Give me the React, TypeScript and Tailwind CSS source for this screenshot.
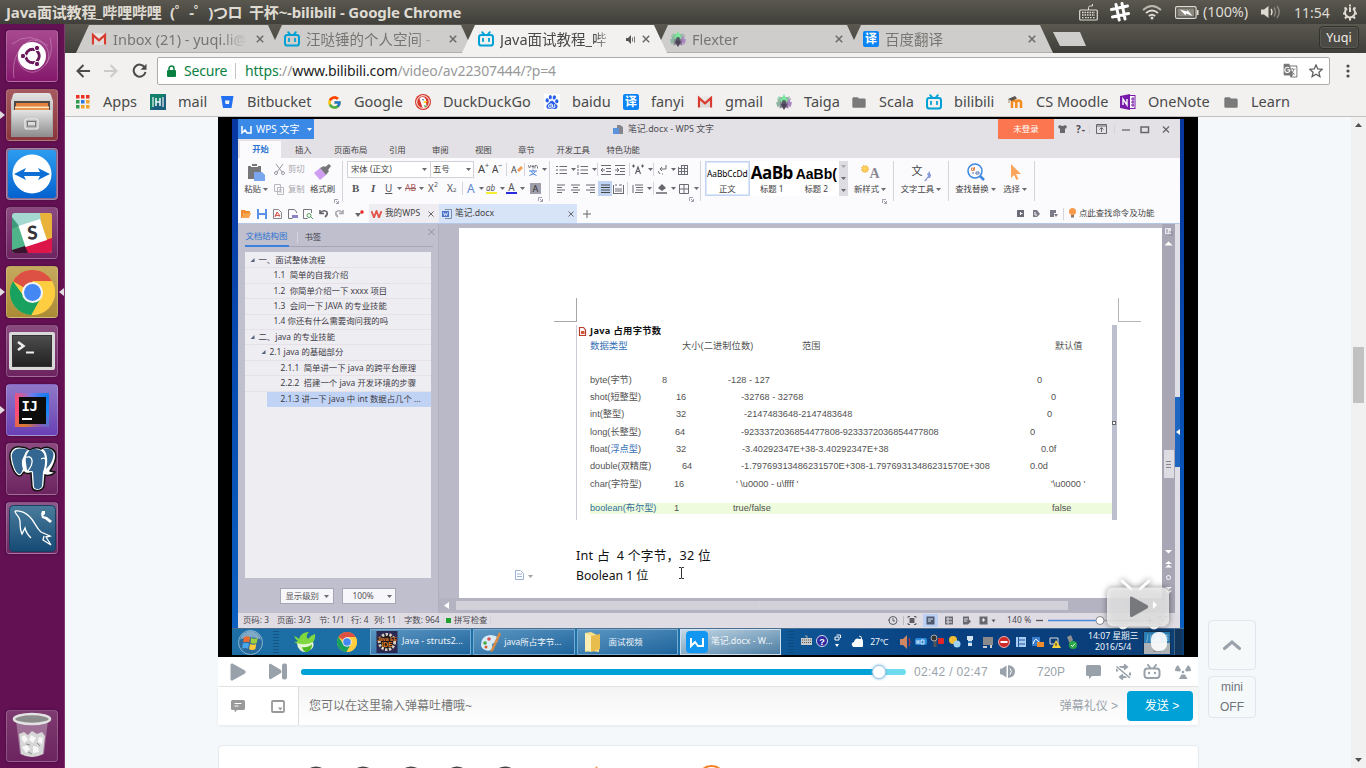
import React from "react";
import { FcGoogle } from "react-icons/fc";
import { SiBaidu } from "react-icons/si";
import { MdFolder, MdGTranslate } from "react-icons/md";

type P = { children?: React.ReactNode; className?: string };

/* ---------- small building blocks ---------- */

function Svg({ w, h, vb, children, className = "" }: { w: number; h: number; vb?: string; children: React.ReactNode; className?: string }) {
  return (
    <svg width={w} height={h} viewBox={vb ?? `0 0 ${w} ${h}`} className={`block shrink-0 ${className}`} fill="none">
      {children}
    </svg>
  );
}

function Cell({ children, className = "" }: P) {
  return <span className={`flex shrink-0 items-center whitespace-nowrap ${className}`}>{children}</span>;
}

function Sep({ className = "" }: P) {
  return <span className={`block w-px shrink-0 bg-[#d5d4dc] ${className}`} />;
}

function Caret({ color = "#6a6a72" }: { color?: string }) {
  return (
    <Svg w={5} h={3}>
      <path d="M0 0h5L2.5 3z" fill={color} />
    </Svg>
  );
}

const BiliTv = () => (
  <Svg w={16} h={16}>
    <path d="M4.2 1.2l2 2.4M11.8 1.2l-2 2.4" stroke="#00a1d6" strokeWidth="1.9" strokeLinecap="round" />
    <rect x="1" y="4" width="14" height="10.6" rx="2.4" stroke="#00a1d6" strokeWidth="2" />
    <path d="M5 7.6v2.6M11 7.6v2.6" stroke="#00a1d6" strokeWidth="1.8" strokeLinecap="round" />
  </Svg>
);

const Gmail = () => (
  <Svg w={16} h={16}>
    <rect x="1" y="2.5" width="14" height="11" rx="1" fill="#e9e7e6" />
    <path d="M2 13.5V4l6 5.4L14 4v9.5" stroke="#d93b30" strokeWidth="2.2" />
    <path d="M3.2 13.5V7.5L8 11l4.8-3.5v6z" fill="#dcd9d8" />
  </Svg>
);

const Yi = () => (
  <span className="flex size-4 items-center justify-center rounded-[2px] bg-[#0b84f5] text-[12px] leading-none font-bold text-white">译</span>
);

const Flower = () => (
  <Svg w={16} h={16}>
    <path d="M1 4l7 4-6.500 5.500L0 8.500l2-1z" fill="#8eb5a0" />
    <path d="M15 4L8 8l6.500 5.500L16 8.500l-2-1z" fill="#a98ac0" />
    <path d="M2 2.500l6 1 1 5-4 1z" fill="#86c79e" />
    <path d="M14 2.500L8 3.500l-1 5 4 1z" fill="#93b8a3" />
    <path d="M3.500 14.500L4 8l5 1-1.500 4z" fill="#85858f" />
    <path d="M12.500 14.500L12 8l-5 1 1.500 4z" fill="#8d6f9d" />
    <path d="M8 0l3.200 6.500L8 9 4.800 6.500z" fill="#7ae89c" />
    <path d="M8 16l-3-5 3-4.500 3 4.500z" fill="#4b4458" />
    <circle cx="8" cy="8" r="2" fill="#565a62" />
  </Svg>
);

const CloseX = ({ color = "#6b6b6b" }: { color?: string }) => (
  <Svg w={8} h={8}>
    <path d="M.8.8l6.4 6.4M7.2.8L.8 7.2" stroke={color} strokeWidth="1.5" />
  </Svg>
);

const ChromeLogo = ({ s }: { s: number }) => (
  <Svg w={s} h={s} vb="0 0 44 44">
    <circle cx="22" cy="22" r="22" fill="#ffcd40" />
    <path d="M22 22L2.9 11A22 22 0 0 1 41.1 11H22z" fill="#dd5044" />
    <path d="M2.9 11A22 22 0 0 0 21 44l9.5-17.5L22 22l-9 3z" fill="#19a15f" />
    <path d="M22 11h19.1A22 22 0 0 1 21 44l10-17z" fill="#ffcd40" />
    <circle cx="22" cy="22" r="10.3" fill="#f4f4f4" />
    <circle cx="22" cy="22" r="8.3" fill="#4587f3" />
  </Svg>
);

/* ---------- system bar ---------- */

function TopBar() {
  return (
    <header className="flex h-6 shrink-0 items-center bg-gradient-to-b from-[#5a584f] to-[#403f3a] text-[14px] text-[#dfdbd2]">
      <Cell className="w-[1079px] pl-[6px] text-[15px] font-bold">
        <span className="w-[164px] tracking-[-0.15px]">Java面试教程_哔哩哔哩</span>
        <span className="w-[79px] tracking-[-0.4px]">(゜-゜)つロ</span>
        <span className="tracking-[-0.17px]">干杯~-bilibili - Google Chrome</span>
      </Cell>
      <Cell className="w-[31px]">
        <Svg w={19} h={18}>
          <path d="M9.5 7V4.5q0-1.5 2-1.5h2V1" stroke="#dfdbd2" />
          <rect x=".7" y="7" width="17.6" height="10" rx="1" stroke="#dfdbd2" strokeWidth="1.2" />
          <path d="M3 9.5h13M3 12h13M3 14.6h2M6 14.6h7M14 14.6h2" stroke="#dfdbd2" strokeWidth="1.4" strokeDasharray="1.6 .9" />
        </Svg>
      </Cell>
      <Cell className="w-8">
        <Svg w={20} h={20}>
          <path d="M6 2.5l3.2 15.5M12 1.5L15 17M1.5 7.5l16-3.5M2.5 15l16-3.5" stroke="#fff" strokeWidth="3" strokeLinecap="round" />
        </Svg>
      </Cell>
      <Cell className="w-[33px]">
        <Svg w={20} h={16}>
          <path d="M1 6Q10-2 19 6" stroke="#bdb9b1" strokeWidth="1.8" />
          <path d="M4 9q6-5 12 0" stroke="#dfdbd2" strokeWidth="1.8" />
          <path d="M6.8 12q3.2-2.6 6.4 0" stroke="#dfdbd2" strokeWidth="1.8" />
          <circle cx="10" cy="14" r="1.5" fill="#dfdbd2" />
        </Svg>
      </Cell>
      <Cell className="w-[28px]">
        <Svg w={24} h={13}>
          <rect x=".6" y=".6" width="20.5" height="11.8" rx="1.5" stroke="#dfdbd2" strokeWidth="1.2" />
          <rect x="2.5" y="2.5" width="16.7" height="8" fill="#8c8981" />
          <path d="M22 4h1.6v5H22z" fill="#dfdbd2" />
          <path d="M5 3.500l7 2L12.500 4l5 6-6.500-2.500-.5 2z" fill="#fff" />
        </Svg>
      </Cell>
      <Cell className="w-[58px] text-[14.5px] tracking-[-0.1px]">(100%)</Cell>
      <Cell className="w-[33px]">
        <Svg w={20} h={14}>
          <path d="M0 4.5h3L7.5 1v12L3 9.5H0z" fill="#dfdbd2" />
          <path d="M10 4q2 3 0 6" stroke="#dfdbd2" strokeWidth="1.5" />
          <path d="M13 2.5q3 4.5 0 9M16 1q4.4 6 0 12" stroke="#8c8981" strokeWidth="1.4" />
        </Svg>
      </Cell>
      <Cell className="w-12 text-[14px]">11:54</Cell>
      <Svg w={16} h={17}>
        <path d="M8 3.2V8M5 4.4a5 5 0 1 0 6 0" stroke="#dfdbd2" strokeWidth="2" />
        <path d="M8 13.500v3M1 9.500h2M13 9.500h2M2.500 3.500l2 1.500M13.500 3.500l-2 1.500M3 14.500l1.600-1.700M13 14.500l-1.600-1.700M8 .5v2" stroke="#dfdbd2" strokeWidth="2" />
      </Svg>
    </header>
  );
}

/* ---------- launcher ---------- */

function Tile({ children, className = "", left, right }: P & { left?: boolean; right?: boolean }) {
  return (
    <div className="flex h-[59px] w-[65px] shrink-0 items-start">
      <div className="flex h-[52px] w-[6px] items-center">
        {left && (
          <Svg w={5} h={8}>
            <path d="M0 0l5 4-5 4z" fill="#e2dbe0" />
          </Svg>
        )}
      </div>
      <div className={`flex size-[52px] items-center justify-center overflow-hidden rounded-[4px] border border-white/20 shadow-[0_0_3px_rgba(30,0,30,.5)] ${className}`}>{children}</div>
      <div className="flex h-[52px] w-[7px] items-center justify-end pr-[1px]">
        {right && (
          <Svg w={5} h={8}>
            <path d="M5 0L0 4l5 4z" fill="#e2dbe0" />
          </Svg>
        )}
      </div>
    </div>
  );
}

function Launcher() {
  return (
    <nav className="flex w-[65px] shrink-0 flex-col border-r border-[#7d3a70] bg-[#641153] pt-[6px]">
      <Tile className="bg-gradient-to-b from-[#a8498f] to-[#85176d]">
        <Svg w={52} h={52}>
          <path d="M8 48C4 22 22 10 26 10c16 0 20 16 14 24M44 8C50 30 34 44 24 42 8 38 10 20 18 14M6 14q18-14 36 2" stroke="#d29bc3" strokeOpacity=".55" />
          <circle cx="26" cy="26" r="14" fill="#fff" />
          <circle cx="26.500" cy="26" r="6.700" stroke="#6b1a5c" strokeWidth="3" />
          <path d="M26.500 26H14M26.500 26L32.500 16M26.500 26L32.500 36" stroke="#fff" strokeWidth="1.300" />
          <circle cx="26.500" cy="26" r="5" fill="#fff" />
          <circle cx="17" cy="26" r="2.700" fill="#6b1a5c" stroke="#fff" />
          <circle cx="31" cy="18" r="2.700" fill="#6b1a5c" stroke="#fff" />
          <circle cx="31" cy="34" r="2.700" fill="#6b1a5c" stroke="#fff" />
        </Svg>
      </Tile>
      <Tile left className="bg-gradient-to-b from-[#a55a5f] to-[#8b353c]">
        <Svg w={44} h={46}>
          <defs>
            <linearGradient id="cab" x1="0" y1="0" x2="0" y2="1">
              <stop offset="0" stopColor="#e3e3e3" />
              <stop offset="1" stopColor="#8f8f8f" />
            </linearGradient>
          </defs>
          <path d="M3 3Q3 1 6 1h32q3 0 3 2l2 6v36H1V9z" fill="url(#cab)" />
          <rect x="4" y="9" width="36" height="11" fill="#4f4844" />
          <path d="M6 11h32v7H6z" fill="#e2823e" />
          <path d="M5 14.500h34v4H5z" fill="#fbe3c4" />
          <path d="M5 16h34v3H5z" fill="#e8964f" />
          <rect x="2" y="18" width="40" height="26" rx="1" fill="url(#cab)" />
          <rect x="15" y="27" width="13" height="10" rx="2" fill="#b6b6b6" stroke="#efefef" strokeWidth="1.200" />
          <rect x="17.500" y="29.500" width="8" height="4.500" fill="#ddd" stroke="#777" />
        </Svg>
      </Tile>
      <Tile className="bg-[#8a6a94]">
        <Svg w={48} h={48}>
          <defs>
            <linearGradient id="tv" x1="0" y1="0" x2="0" y2="1">
              <stop offset="0" stopColor="#2c9df0" />
              <stop offset="1" stopColor="#0462cf" />
            </linearGradient>
          </defs>
          <rect width="48" height="48" rx="3" fill="url(#tv)" />
          <circle cx="24" cy="24" r="19.500" fill="#fff" />
          <path d="M6 24l12-6-2 4h16l-2-4 12 6-12 6 2-4H16l2 4z" fill="#0d6fd6" />
        </Svg>
      </Tile>
      <Tile className="bg-gradient-to-b from-[#8a4a80] to-[#6d2460]">
        <Svg w={40} h={40}>
          <defs>
            <clipPath id="sl">
              <rect width="40" height="40" rx="3" />
            </clipPath>
          </defs>
          <g clipPath="url(#sl)">
            <rect width="40" height="40" fill="#a4d9d2" />
            <path d="M28 0h12v26l-9 3z" fill="#e9b23a" />
            <path d="M0 14l7-1 8 22-15 4z" fill="#4fb48a" />
            <path d="M12 34l28-9v15H12z" fill="#dc1648" />
            <path d="M0 37l13-4 3 7H0z" fill="#39132f" />
            <path d="M0 4l7 9-7 3z" fill="#3d9a7a" />
            <path d="M6.500 13L28 6l7 21-21.500 7z" fill="#fff" />
          </g>
          <text x="20.500" y="26.500" fontFamily="Lato" fontWeight="900" fontSize="19" fill="#35323a" textAnchor="middle" transform="rotate(-3 20 20)">S</text>
        </Svg>
      </Tile>
      <Tile left right className="bg-gradient-to-b from-[#c5a95e] to-[#ab8b35]">
        <ChromeLogo s={45} />
      </Tile>
      <Tile className="bg-gradient-to-b from-[#8a4a80] to-[#6d2460]">
        <div className="flex h-[38px] w-[46px] rounded-[2px] border-[3px] border-[#d9d9d9] bg-[#333] p-px">
          <Svg w={38} h={30} className="bg-gradient-to-b from-[#4d4d4d] to-[#222]">
            <path d="M5 6l5.500 4L5 14" stroke="#eee" strokeWidth="2.500" />
            <path d="M13 16.500h8" stroke="#eee" strokeWidth="2" />
          </Svg>
        </div>
      </Tile>
      <Tile left className="bg-gradient-to-b from-[#9078c8] to-[#6a3fb4]">
        <div className="flex size-[34px] items-center justify-center bg-[conic-gradient(#6b7df0,#0b7cf0,#1f8af5,#8b5ab0,#d97a30,#fc4a7a,#f2507c,#6b7df0)]">
          <div className="flex size-[27px] flex-col items-start bg-[#0c0c0c] pt-[2px] pl-[3px] font-['DejaVu_Sans_Mono',monospace] text-[14px] leading-[14px] font-bold tracking-[-0.5px] text-white">
            IJ
            <span className="mt-[5px] block h-[2px] w-[10px] bg-white" />
          </div>
        </div>
      </Tile>
      <Tile className="bg-gradient-to-b from-[#8a4a80] to-[#6d2460]">
        <Svg w={50} h={50}>
          <path d="M14 3C6 2 2 7 3 14c1 9 5 17 9 18 3 1 4-4 5-4 1 2 3 2 7 1l1 14c1 5 10 5 12-1l1-11c3 1 8 0 10-3-2-1-4 0-5-1 4-6 7-14 5-19-3-5-10-6-14-3-4-2-8-1-11 1-3-2-6-3-9-3z" fill="#fff" stroke="#111" strokeWidth="1.500" />
          <path d="M14 4.500C7 4 4 9 5 14c1 8 4 15 7 16 2 1 3-3 4-5-2-6-1-10 1-13 1-3 2-5 4-6-2-1-5-1.500-7-1.500zM27 5c-7 0-9 9-8 14l1 7c3 2 6 0 6 2l1 15c1 3 7 3 8-1l1-14c2-5 3-12 1-18-2-4-6-5-10-5zM36 5c5 4 5 14 3 20 5-4 9-13 7-17-2-4-7-4-10-3z" fill="#336791" />
          <path d="M17 14q7-3 8 2c1 5-2 8-5 12M34 15q4-2 5 1" stroke="#fff" strokeWidth="1.300" />
        </Svg>
      </Tile>
      <Tile className="bg-gradient-to-b from-[#8a5a8a] to-[#6d2460]">
        <Svg w={47} h={47}>
          <defs>
            <linearGradient id="my" x1="0" y1="0" x2="0" y2="1">
              <stop offset="0" stopColor="#4a7c9c" />
              <stop offset="1" stopColor="#154a75" />
            </linearGradient>
          </defs>
          <rect x=".5" y=".5" width="46" height="46" rx="4" fill="url(#my)" stroke="#1a3f63" />
          <path d="M6 6c6-1 11 2 15 6 5 5 6 11 11 15l9 4-4 1 5 8-8-5 1-4M6 6c0 4 5 5 5 10 0 6 0 9 2 13l3-6c1 5 3 7 6 10" stroke="#fff" strokeWidth="1.300" />
          <path d="M33 6l3 0v3l-2 2 4 1 5 4-2 2-5-4-3-1-1-4z" fill="#fff" />
        </Svg>
      </Tile>
      <div className="mt-[149px]">
        <Tile className="bg-gradient-to-b from-[#7d3a70] to-[#6d2460]">
          <Svg w={44} h={48}>
            <path d="M6 8h32l-4 34q-12 6-24 0z" fill="#b79bb4" fillOpacity=".6" />
            <ellipse cx="22" cy="7" rx="18" ry="5" fill="#8c8c8c" stroke="#e2e2e2" strokeWidth="2.500" />
            <path d="M9 22l5-2 4 3 4-4 5 3 5-2 3 4-2 18q-11 6-22 0z" fill="#d6d6d6" />
            <path d="M11 25l4-2 3 5-4 3zM21 23l5 3-3 5-4-3zM29 25l4 1-1 6-4-2zM12 35l5-2 3 4-4 4zM23 34l5 1 1 5-6 1z" fill="#f7f7f7" />
            <path d="M16 32l4 1M27 31l3 3M18 40l4 2" stroke="#8a8a8a" />
          </Svg>
        </Tile>
      </div>
    </nav>
  );
}

/* ---------- browser chrome ---------- */

function Tab({ icon, title, active, titleW }: { icon: React.ReactNode; title: string; active?: boolean; titleW: string }) {
  return (
    <div className={`relative -ml-[12px] h-7 w-[205px] shrink-0 ${active ? "z-10" : ""}`}>
      <div className={`absolute inset-0 [clip-path:polygon(0_100%,13px_0,192px_0,100%_100%)] ${active ? "bg-[#f2f1f0]" : "border-b border-[#b1afad] bg-[#cfcdcb]"}`} />
      <div className={`relative flex h-full items-center ${active ? "pl-[16px]" : "pl-[15px]"}`}>
        {icon}
        <span className={`ml-[6px] block text-[14.5px] leading-7 whitespace-nowrap ${titleW} ${active ? "text-[#474747]" : "text-[#777572]"} [mask-image:linear-gradient(to_right,black_80%,transparent)]`}>{title}</span>
        {active && (
          <span className="ml-[9px]">
            <Svg w={12} h={9}>
              <path d="M0 3h2l3-3v9L2 6H0z" fill="#555" />
              <path d="M6.500 2.500v4M8.500 1.500v6" stroke="#777" />
            </Svg>
          </span>
        )}
        <span className={active ? "ml-[4px]" : "ml-[8px]"}>
          <CloseX />
        </span>
      </div>
    </div>
  );
}

function TabStrip() {
  return (
    <div className="flex h-[29px] shrink-0 items-start bg-gradient-to-b from-[#5a584f] to-[#403f3a] pt-px pl-[23px]">
      <Tab icon={<Gmail />} title="Inbox (21) - yuqi.li@" titleW="w-[135px]" />
      <Tab icon={<BiliTv />} title="汪哒锤的个人空间 - " titleW="w-[135px]" />
      <Tab active icon={<BiliTv />} title="Java面试教程_哔" titleW="w-[117px]" />
      <Tab icon={<Flower />} title="Flexter" titleW="w-[135px]" />
      <Tab icon={<Yi />} title="百度翻译" titleW="w-[135px]" />
      <div className="mt-[7px] h-[14px] w-[33px] bg-[#cfcdcb] [clip-path:polygon(0_0,27px_0,100%_100%,7px_100%)]" />
      <div className="mt-px ml-[233px] flex h-[23px] w-10 items-center justify-center rounded-[4px] border border-[#33322e] bg-[#4c4a44] pt-[2px] text-[12.5px] text-[#eeebe4] shadow-[inset_0_0_0_1px_rgba(255,255,255,.08)]">Yuqi</div>
    </div>
  );
}

function UrlBar() {
  return (
    <div className="flex h-[33px] shrink-0 items-start bg-[#f2f1f0] pt-1 pl-[11px]">
      <Cell className="h-[27px] w-[81px] gap-[14px]">
        <Svg w={14} h={14}>
          <path d="M14 7H1.500M7.500 1L1.500 7l6 6" stroke="#4b4b4b" strokeWidth="2" />
        </Svg>
        <Svg w={14} h={14}>
          <path d="M0 7h12.500M6.500 1l6 6-6 6" stroke="#cbcac9" strokeWidth="2" />
        </Svg>
        <Svg w={15} h={15}>
          <path d="M12.800 4.500A6 6 0 1 0 13.500 9" stroke="#4b4b4b" strokeWidth="2" />
          <path d="M14.500 .8v6h-6z" fill="#4b4b4b" />
        </Svg>
      </Cell>
      <div className="flex h-7 w-[1173px] items-center rounded-[2px] border border-[#aeacaa] bg-white pb-px pl-[9px] text-[14px] text-[#999]">
        <Svg w={9} h={12}>
          <path d="M2 5V3.500a2.500 2.500 0 0 1 5 0V5" stroke="#0b8043" strokeWidth="1.500" />
          <rect y="5" width="9" height="7" rx="1" fill="#0b8043" />
        </Svg>
        <span className="ml-[8px] w-[51px] tracking-[-0.2px] text-[#0b8043]">Secure</span>
        <span className="h-4 w-px bg-[#c4c4c4]" />
        <span className="ml-[9px] w-[1038px] tracking-[-0.12px] whitespace-nowrap">
          <span className="text-[#0b8043]">https</span>://<span className="text-[#222]">www.bilibili.com</span>/video/av22307444/?p=4
        </span>
        <MdGTranslate size={15} color="#777" />
        <Svg w={14} h={14} className="ml-[11px]">
          <path d="M7 1l1.800 4 4.400.4-3.300 2.900 1 4.300L7 10.300 3.100 12.600l1-4.300L.8 5.400 5.200 5z" stroke="#606060" strokeWidth="1.300" />
        </Svg>
      </div>
      <Cell className="h-7 pl-[16px]">
        <Svg w={4} h={14}>
          <circle cx="2" cy="2" r="1.600" fill="#4b4b4b" />
          <circle cx="2" cy="7" r="1.600" fill="#4b4b4b" />
          <circle cx="2" cy="12" r="1.600" fill="#4b4b4b" />
        </Svg>
      </Cell>
    </div>
  );
}

const AppsIcon = () => (
  <Svg w={14} h={14}>
    {["#ea3323", "#ea3323", "#ea3323", "#2f9a4e", "#2a78e4", "#f0a32a", "#2f9a4e", "#f0a32a", "#f0a32a"].map((c, i) => (
      <rect key={i} x={(i % 3) * 5} y={Math.floor(i / 3) * 5} width="3.500" height="3.500" fill={c} />
    ))}
  </Svg>
);

const bookmarks: [string, string, React.ReactNode][] = [
  ["Apps", "w-[75px]", <AppsIcon />],
  ["mail", "w-[69px]", (
    <Svg w={16} h={16}>
      <rect width="16" height="16" fill="#1c5f7c" />
      <path d="M0 0h16L0 16z" fill="#13806c" />
      <path d="M3 3v10M13 3v10" stroke="#e8f4f2" strokeWidth="1.200" />
      <path d="M6 4v8M10 4v8M6 8h4" stroke="#e8f4f2" strokeWidth="1.600" />
    </Svg>
  )],
  ["Bitbucket", "w-[107px]", (
    <Svg w={16} h={16}>
      <path d="M2 2h12.500l-2 12H4z" fill="#2370f0" />
      <path d="M6 6.500h4.500L10 10H6.500z" fill="#f2f1f0" />
    </Svg>
  )],
  ["Google", "w-[89px]", <FcGoogle size={15} />],
  ["DuckDuckGo", "w-[129px]", (
    <Svg w={16} h={16}>
      <circle cx="8" cy="8" r="8" fill="#d8392b" />
      <circle cx="8" cy="8" r="6.300" stroke="#fff" strokeWidth="1" />
      <path d="M4.500 4.500Q7 2 10 4c1.500 2 1 3 1 4.500l.5 3.500Q10 15 7.500 13.500z" fill="#fff" />
      <path d="M8.500 7.500q3.500-1 4 0-1 1.500-4 1.500z" fill="#fdc400" />
      <path d="M8.500 11l3.500 1-2 1.500z" fill="#5ba846" />
      <circle cx="8" cy="5.800" r=".8" fill="#2d4f8e" />
    </Svg>
  )],
  ["baidu", "w-[79px]", <span className="flex size-4 items-center justify-center bg-white"><SiBaidu size={14} color="#2a5ee8" /></span>],
  ["fanyi", "w-[74px]", <Yi />],
  ["gmail", "w-[79px]", <Gmail />],
  ["Taiga", "w-[75px]", <Flower />],
  ["Scala", "w-[75px]", <MdFolder size={17} color="#7a7a7a" />],
  ["bilibili", "w-[82px]", <BiliTv />],
  ["CS Moodle", "w-[112px]", (
    <Svg w={16} h={16}>
      <path d="M4 14V8.500q0-2 2-2t2.300 2V14M8.300 8.500q0-2 2.200-2t2.500 2V14" stroke="#f58a1f" strokeWidth="2.500" />
      <path d="M0 5l7-3 2 2.500L3.500 7z" fill="#5a534e" />
      <path d="M1 5v4" stroke="#a58668" />
    </Svg>
  )],
  ["OneNote", "w-[103px]", (
    <Svg w={16} h={16}>
      <rect x="9.500" y="1.500" width="5.500" height="13" fill="#fff" stroke="#7719aa" />
      <path d="M13 3v10M11 5h3M11 8h3M11 11h3" stroke="#7719aa" />
      <path d="M0 2l10-2v16L0 14z" fill="#7719aa" />
      <path d="M3 11V5l4 6V5" stroke="#fff" strokeWidth="1.400" />
    </Svg>
  )],
  ["Learn", "w-[75px]", <MdFolder size={17} color="#7a7a7a" />],
];

function Bookmarks() {
  return (
    <div className="flex h-[31px] shrink-0 items-center border-b border-[#c2c1c0] bg-[#f2f1f0] pt-[2px] pl-[10px] text-[14.5px] text-[#4a4a4a]">
      {bookmarks.map(([t, w, icon]) => (
        <Cell key={t} className={w}>
          <span className="flex w-4 shrink-0 items-center justify-center">{icon}</span>
          <span className="ml-3">{t}</span>
        </Cell>
      ))}
    </div>
  );
}

/* ---------- word processor shown in the video ---------- */

function TitleRow() {
  return (
    <div className="flex h-5 shrink-0 items-center text-[9px] text-[#4b4b52]">
      <Cell className="h-full w-[76px] bg-[#3b89e6] pl-[3px] text-[10px] text-white">
        <Svg w={11} h={9}>
          <path d="M1 1v7l3-3 2 3h4V1" stroke="#fff" strokeWidth="1.500" />
        </Svg>
        <span className="ml-[4px] w-[51px]">WPS 文字</span>
        <Caret color="#fff" />
      </Cell>
      <Cell className="ml-[299px] w-[385px] text-[8.9px]">
        <Svg w={11} h={10}>
          <path d="M4 1h3l3 2v7H4z" fill="#85858d" />
          <rect y="4" width="6" height="6" fill="#5b92da" />
        </Svg>
        <span className="ml-[4px]">笔记.docx - WPS 文字</span>
      </Cell>
      <Cell className="h-full w-14 justify-center bg-[#fc7750] text-[8.5px] text-white">未登录</Cell>
      <Cell className="w-[13px] justify-end">
        <Svg w={9} h={8}>
          <path d="M2 0q2.500 2 5 0l2 1.500L8 3.500H7V8H2V3.500H1L0 1.500z" fill="#66666c" />
        </Svg>
      </Cell>
      <Cell className="w-[18px] justify-end gap-px text-[10px] font-bold">?<span>-</span></Cell>
      <Sep className="mx-[4px] h-[9px] bg-[#a6a5ac]" />
      <Svg w={11} h={10} className="ml-[2px]">
        <path d="M.5.5h10v9H.5zM0 2h11M5.500 8V4M3.500 5.500l2-2 2 2" stroke="#66666c" />
      </Svg>
      <Sep className="mx-[7px] h-[9px] bg-[#a6a5ac]" />
      <Svg w={48} h={9}>
        <path d="M0 5h8" stroke="#66666c" strokeWidth="1.300" />
        <rect x="19" y="2" width="7.500" height="5.500" stroke="#66666c" strokeWidth="1.500" />
        <path d="M41 1.500l6 6M47 1.500l-6 6" stroke="#66666c" strokeWidth="1.300" />
      </Svg>
    </div>
  );
}

const menu: [string, string][] = [
  ["插入", "w-[39px]"],
  ["页面布局", "w-[55px]"],
  ["引用", "w-[43px]"],
  ["审阅", "w-[43px]"],
  ["视图", "w-[43px]"],
  ["章节", "w-[38.500px]"],
  ["开发工具", "w-[50px]"],
  ["特色功能", "w-[50px]"],
];

function MenuRow() {
  return (
    <div className="flex h-[19px] shrink-0 items-end text-[8.4px] text-[#444]">
      <Cell className="ml-[2px] mr-[14px] h-[17px] w-[41px] justify-center bg-[#fbfafd] font-bold text-[#2b76d0]">开始</Cell>
      {menu.map(([t, w]) => (
        <Cell key={t} className={`h-[17px] pt-px ${w}`}>{t}</Cell>
      ))}
    </div>
  );
}

const Lines = ({ d, s = "#6b6b73" }: { d: string; s?: string }) => (
  <Svg w={11} h={10}>
    <path d={d} stroke={s} />
  </Svg>
);

const Launch = () => (
  <Svg w={5} h={5} className="self-end">
    <path d="M.500 4V.500H4M2 2l2.500 2.500M4.500 2v2.500H2" stroke="#9a99a8" strokeWidth=".9" />
  </Svg>
);

function StyleBox({ sample, label, cls, sel }: { sample: string; label: string; cls: string; sel?: boolean }) {
  return (
    <div className={`flex h-[35px] w-[44.500px] flex-col items-center overflow-hidden bg-white ${sel ? "border border-[#c3d5f3] shadow-[inset_0_0_0_1px_#dbe6f9]" : ""}`}>
      <span className={`flex h-[21px] w-full items-end justify-center leading-none whitespace-nowrap text-black ${cls}`}>{sample}</span>
      <span className="pt-px text-[8.4px] leading-[12px] text-[#444]">{label}</span>
    </div>
  );
}

function BigTool({ icon, label, w, caret = true }: { icon: React.ReactNode; label: string; w: string; caret?: boolean }) {
  return (
    <div className={`flex h-full shrink-0 flex-col items-center ${w}`}>
      <span className="flex h-[20px] items-end">{icon}</span>
      <span className="mt-px flex items-center gap-[2px] text-[8.4px] leading-[14px] whitespace-nowrap text-[#444]">
        {label}
        {caret && <Caret />}
      </span>
    </div>
  );
}

function Ribbon() {
  return (
    <div className="flex h-[46px] shrink-0 bg-[#fbfafd] pt-[3px] text-[8.4px] text-[#444]">
      <BigTool
        w="ml-[4px] w-[28px]"
        label="粘贴"
        icon={
          <Svg w={17} h={17}>
            <path d="M0 2h4V0h5v2h4v13H0z" fill="#77777b" />
            <path d="M3 2.500h7" stroke="#fff" />
            <path d="M6 8h8l3 3v6H6z" fill="#7aa6f0" />
          </Svg>
        }
      />
      <div className="ml-[4px] flex w-[32px] flex-col text-[#a7a6ad]">
        <Cell className="h-[17px] gap-[3px]">
          <Svg w={11} h={11}>
            <path d="M2 0l6 8M9 0L3 8" stroke="#9a99a1" />
            <circle cx="2" cy="9" r="1.500" stroke="#9a99a1" />
            <circle cx="9" cy="9" r="1.500" stroke="#9a99a1" />
          </Svg>
          剪切
        </Cell>
        <Cell className="mt-[3px] h-[17px] gap-[3px]">
          <Svg w={11} h={11}>
            <path d="M.5.500h6v7h-6zM3.500 3.500h6v7h-6zM5 6h3M5 8h3" stroke="#bab9c1" />
          </Svg>
          复制
        </Cell>
      </div>
      <div className="flex w-[33px] shrink-0 flex-col">
        <BigTool
          w="w-[33px]"
          label="格式刷"
          caret={false}
          icon={
            <Svg w={17} h={17}>
              <path d="M0 9l6-5 6 7-6 5z" fill="#cf9df2" />
              <path d="M6 4l4-2 1 1 4-3 2 2-3 4 1 1-3 4z" fill="#77777b" />
            </Svg>
          }
        />
        <span className="-mt-[5px] flex justify-end"><Launch /></span>
      </div>
      <Sep className="ml-[3px] h-[40px]" />
      <div className="ml-[4px] flex w-[202px] flex-col">
        <div className="flex h-[17px] items-center">
          <Cell className="h-[17px] w-[84px] justify-between border border-[#d3d2da] bg-white px-[3px]">宋体 (正文)<Caret /></Cell>
          <Cell className="h-[17px] w-[43px] justify-between border border-l-0 border-[#d3d2da] bg-white px-[2px]">五号<Caret /></Cell>
          <Cell className="w-[14px] pl-[4px] text-[11px]">A<sup className="text-[7px]">+</sup></Cell>
          <Cell className="w-[18px] pl-[4px] text-[10px]">A<sup className="text-[7px]">−</sup></Cell>
          <Sep className="h-[13px]" />
          <Cell className="w-[17px] pl-[4px] text-[9px]">A
            <Svg w={6} h={7}><path d="M0 4l4-4 2 2-4 4z" fill="#f09c52" /></Svg>
          </Cell>
          <Sep className="h-[13px]" />
          <Cell className="gap-[4px] pl-[3px]">
            <Svg w={10} h={12}>
              <path d="M0 1l1.500 3L3 1M3.500 2.500h3M5 1v3.500M7 4.500V1.500q2-.5 2.500 1v2" stroke="#6b6b73" strokeWidth=".9" />
              <path d="M1 7h8M5 5.500V7M3 7q1 3 5.500 4.500M7.500 7Q6 10.500 1.500 11.500" stroke="#4a84d8" />
            </Svg>
            <Caret />
          </Cell>
        </div>
        <div className="mt-[2px] flex h-[17px] items-center text-[10px] text-[#55555c]">
          <Cell className="w-[20px] pl-[5px] font-['Liberation_Serif',serif] text-[11px] font-bold">B</Cell>
          <Cell className="w-[15px] pl-[4px] font-['Liberation_Serif',serif] text-[11px] font-bold italic">I</Cell>
          <Cell className="w-[23px] gap-[5px] pl-[3px]"><u>U</u><Caret /></Cell>
          <Cell className="w-[23px] gap-[3px] text-[8.500px] text-[#a05a5a]"><s>AB</s><Caret /></Cell>
          <Cell className="w-[19px]">X<sup className="text-[7px]">2</sup></Cell>
          <Cell className="w-[15px]">X<sub className="text-[6px]">2</sub></Cell>
          <Sep className="h-[13px]" />
          <Cell className="w-[23px] gap-[4px] pl-[4px] text-[12px] text-[#5b88d2]">A<Caret /></Cell>
          <Cell className="w-[20px] gap-[3px]">
            <span className="flex flex-col text-[8px] leading-[8px] italic">ab<span className="block h-[2px] w-[11px] bg-[#f3ee2e]" /></span>
            <Caret />
          </Cell>
          <Cell className="w-[24px] gap-[3px]">
            <span className="flex w-[11px] flex-col items-center leading-[9px]">A<span className="block h-[2px] w-[11px] bg-[#2a2ae0]" /></span>
            <Caret />
          </Cell>
          <span className="flex h-[11px] w-[11px] items-center justify-center bg-[#9f9fab] text-[9px] text-[#333]">A</span>
        </div>
        <span className="flex justify-end pr-[6px]"><Launch /></span>
      </div>
      <Sep className="h-[40px]" />
      <div className="ml-[6px] flex w-[144px] flex-col">
        <div className="flex h-[17px] items-center">
          <Cell className="w-[21px] gap-[4px]"><Lines d="M0 1.500h2M3.500 1.500H11M0 5h2M3.500 5H11M0 8.500h2M3.500 8.500H11" /><Caret /></Cell>
          <Cell className="w-[20px] gap-[4px]"><Lines d="M1 0v3M3.500 1.500H11M1 4v2M3.500 5H11M1 7v3M3.500 8.500H11" /><Caret /></Cell>
          <Sep className="h-[13px]" />
          <Cell className="ml-[3px] w-[14px]"><Lines d="M0 .5h10M5 3.500h5M5 6.500h5M0 9.500h10M4 5H0M2 3L0 5l2 2" /></Cell>
          <Cell className="w-[14px]"><Lines d="M0 .5h10M5 3.500h5M5 6.500h5M0 9.500h10M0 5h4M2 3l2 2-2 2" /></Cell>
          <Sep className="h-[13px]" />
          <Cell className="w-[23px] gap-[4px] pl-[2px]">
            <Svg w={12} h={11}><path d="M3.500 10L6 3l2.500 7M4.500 7.500h3M0 2h3M1.500.500v3M9 2h3M10.500.500v3" stroke="#5c5c64" strokeWidth="1.100" /></Svg>
            <Caret />
          </Cell>
          <Sep className="h-[13px]" />
          <Cell className="w-[24px] gap-[4px] pl-[4px]"><Svg w={9} h={10}><path d="M8 0v4H2M4 2L2 4l2 2M0 6l2 3M4 9h1" stroke="#6b6b73" /></Svg><Caret /></Cell>
          <Lines d="M.5 2v8M3.500 0v10M6.500 0v10M9.500 0v10M3 .500h7M0 3.500h10M0 6.500h10M0 9.500h10" />
        </div>
        <div className="mt-[2px] flex h-[17px] items-center">
          <Cell className="w-[15px] pl-px"><Lines d="M0 1h8M0 3.500h5M0 6h8M0 8.500h5" /></Cell>
          <Cell className="w-[15px]"><Lines d="M0 1h9M2 3.500h5M0 6h9M2 8.500h5" /></Cell>
          <Cell className="w-[12px]"><Lines d="M0 1h9M4 3.500h5M0 6h9M4 8.500h5" /></Cell>
          <Cell className="h-[15px] w-[14px] justify-center bg-[#bfd3f2]"><Lines s="#444" d="M1 1h9M1 3.500h9M1 6h9M1 8.500h9" /></Cell>
          <Cell className="w-[15px] pl-px"><Lines d="M.5 1v9M10.500 1v9M0 9.500h11M2 5h7M2 1h2M6 1h3M2 7h7" /></Cell>
          <Sep className="h-[13px]" />
          <Cell className="w-[25px] gap-[4px] pl-[4px]"><Lines d="M3 1h8M4 3.500h7M4 6h7M3 8.500h8M1 1v8" /><Caret /></Cell>
          <Sep className="h-[13px]" />
          <Cell className="w-[23px] gap-[3px] pl-[2px]"><Svg w={12} h={11}><path d="M2 5l4-4 4 4-4 3z" fill="#66666c" /><path d="M0 10h11" stroke="#66666c" strokeWidth="1.500" /></Svg><Caret /></Cell>
          <Cell className="gap-[4px] pl-[2px]"><Lines d="M.5.500h9v9h-9zM5 0v10M0 5h10" /><Caret /></Cell>
        </div>
        <span className="flex justify-end pr-[6px]"><Launch /></span>
      </div>
      <Sep className="h-[40px]" />
      <div className="ml-[4px] flex h-[35px]">
        <StyleBox sel sample="AaBbCcDd" label="正文" cls="text-[8.400px] pb-[4px] tracking-[-0.1px]" />
        <StyleBox sample="AaBb" label="标题 1" cls="text-[17px] tracking-[-0.5px] font-bold font-['Open_Sans','Noto_Sans'] pb-px" />
        <StyleBox sample="AaBb(" label="标题 2" cls="text-[14px] font-bold font-['Liberation_Sans'] pb-px" />
        <div className="flex w-[9px] flex-col items-center justify-around bg-[#dddce2]"><Caret color="#aaa" /><Caret /><Caret /></div>
      </div>
      <div className="ml-[6px] flex w-[33px] shrink-0 flex-col">
        <BigTool w="w-[33px]" label="新样式" icon={<span className="flex items-end"><Svg w={9} h={17}><circle cx="5" cy="5" r="3" fill="#ffd35e" stroke="#f0b03a" strokeDasharray="1 1" strokeWidth="2" /></Svg><span className="font-['Liberation_Serif',serif] text-[14px] leading-[15px] font-bold text-[#8a8a92]">A</span></span>} />
        <span className="-mt-[5px] flex justify-end"><Launch /></span>
      </div>
      <Sep className="ml-[6px] h-[40px]" />
      <BigTool w="ml-[7px] w-[41px]" label="文字工具" icon={<span className="flex items-end"><span className="mb-[4px] text-[11px] leading-[12px]">文</span><Svg w={8} h={10}><path d="M1 10l4-5-1-2 3-3v3h2l-2 4H5l-2 3z" fill="#8d9dd8" /></Svg></span>} />
      <Sep className="ml-[6px] h-[40px]" />
      <BigTool w="ml-[6px] w-[42px]" label="查找替换" icon={<Svg w={18} h={18}><circle cx="8" cy="8" r="7" stroke="#3a86e0" strokeWidth="1.500" /><path d="M13 13l4 4" stroke="#3a86e0" strokeWidth="2.500" /><path d="M4.500 5h2v2.500h-2zM7.500 4v3.500" stroke="#d98550" /><path d="M5 10h2M9 9h3v2H9z" stroke="#5d7bb0" /></Svg>} />
      <BigTool w="ml-[6px] w-[25px]" label="选择" icon={<Svg w={11} h={17}><path d="M1 0v14l3-3 2.500 5 2-1L6 10h5z" fill="#fba55c" /></Svg>} />
      <Sep className="ml-[6px] h-[40px]" />
    </div>
  );
}

function DocTabs() {
  return (
    <div className="flex h-[20px] shrink-0 items-center border-b border-[#b4c6e6] bg-[#fbfafd] text-[9px] text-[#444]">
      <Cell className="w-[112px] gap-[5.500px] pl-[3px]">
        <Svg w={10} h={9}><path d="M0 1h4l1 1h4v2H3L1 9H0z" fill="#f08c2e" /><path d="M3 4h7l-2 5H1z" fill="#f6a54c" /></Svg>
        <Svg w={10} h={10}><path d="M0 0h10v10H0z" fill="#5b92e8" /><path d="M2 0h6v4H2zM2 6h6v4H2z" fill="#fff" /></Svg>
        <Svg w={10} h={10}><path d="M1.500.500h5l3 3v6h-8z" stroke="#888" /><path d="M3 8l2-5 3 4-5-1" stroke="#d8473b" /></Svg>
        <Svg w={10} h={10}><path d="M8.500 4V3l-2-2.500h-6v9h4" stroke="#77777f" /><rect x="4" y="6" width="6" height="3" fill="#8c83c8" /></Svg>
        <Svg w={10} h={10}><path d="M8.500 4V.500h-8v9h4" stroke="#77777f" /><circle cx="6" cy="6.500" r="2" stroke="#51a05a" /><path d="M8 8l2 2" stroke="#51a05a" /></Svg>
        <Svg w={10} h={9}><path d="M1 1v3.500h4M1.500 4Q5 0 8 3q1 3-2 5" stroke="#66666c" strokeWidth="1.600" /></Svg>
        <Svg w={10} h={9}><path d="M9 1v3.500H5M8.500 4Q5 0 2 3q-1 3 2 5" stroke="#aaa9b0" strokeWidth="1.600" /></Svg>
      </Cell>
      <Cell className="w-[19px] pl-[5px]">
        <Svg w={9} h={8}><path d="M0 3h6L3 7z" fill="#66666c" /><circle cx="7" cy="2" r="1.700" fill="#f02020" /></Svg>
      </Cell>
      <Cell className="h-full w-[70px] bg-[#efedf2] pl-[2px] text-[8.600px]">
        <Svg w={11} h={8} className="mr-[3px]"><path d="M.500 1L3 7.500 5.500 1 8 7.500 10.500 1" stroke="#e0544a" strokeWidth="1.800" /></Svg>
        <span className="w-[43px]">我的WPS</span>
        <Svg w={6} h={6}><path d="M.500.500l5 5M5.500.500l-5 5" stroke="#66666c" /></Svg>
      </Cell>
      <Cell className="h-full w-[138px] bg-[#d7e3f6] pl-[3px] text-[8.700px]">
        <Svg w={10} h={10}><path d="M3 .5h6.500v9H3" stroke="#7a8bb0" /><rect y="2" width="7" height="6" fill="#4d76c8" /><path d="M1.500 3.500l1 3 1-2 1 2 1-3" stroke="#fff" strokeWidth=".8" /></Svg>
        <span className="ml-[3px] w-[113px]">笔记.docx</span>
        <Svg w={6} h={6}><path d="M.500.500l5 5M5.500.500l-5 5" stroke="#66666c" /></Svg>
      </Cell>
      <Cell className="w-[439px] pl-[6px]">
        <Svg w={8} h={8}><path d="M4 0v8M0 4h8" stroke="#66666c" /></Svg>
      </Cell>
      <Svg w={45} h={8}>
        <rect x="1" width="7" height="7" fill="#6c6c78" /><path d="M4.500 2v3M4.500 3.500h2" stroke="#fff" />
        <path d="M17 0h4l3 4-3 3h-4z" fill="#7c7c88" /><path d="M19 2v3h2" stroke="#fff" />
        <path d="M34 0h6v3h-2v4h-4zM38 4h4l-2 3z" fill="#7c7c88" />
      </Svg>
      <Sep className="ml-[2px] h-[12px]" />
      <Cell className="gap-[3px] pl-[5px] text-[8.400px]">
        <Svg w={7} h={10}><circle cx="3.500" cy="3.500" r="3.500" fill="#f79b4b" /><path d="M2 7h3v2.500H2z" fill="#8d7768" /></Svg>
        点此查找命令及功能
      </Cell>
    </div>
  );
}

const outline: { t: string; pad: string; arrow?: boolean; sel?: boolean }[] = [
  { t: "一、面试整体流程", pad: "pl-[5px]", arrow: true },
  { t: "1.1  简单的自我介绍", pad: "pl-[29px]" },
  { t: "1.2  你简单介绍一下 xxxx 项目", pad: "pl-[29px]" },
  { t: "1.3  会问一下 JAVA 的专业技能", pad: "pl-[29px]" },
  { t: "1.4 你还有什么需要询问我的吗", pad: "pl-[29px]" },
  { t: "二、java 的专业技能", pad: "pl-[5px]", arrow: true },
  { t: "2.1 java 的基础部分", pad: "pl-[16px]", arrow: true },
  { t: "2.1.1  简单讲一下 java 的跨平台原理", pad: "pl-[36px]" },
  { t: "2.2.2  搭建一个 java 开发环境的步骤", pad: "pl-[36px]" },
  { t: "2.1.3 讲一下 java 中 int 数据占几个 ...", pad: "ml-[22px] pl-[14px]", sel: true },
];

function Sidebar() {
  return (
    <aside className="flex w-[201px] shrink-0 flex-col border-r border-[#b1b0be] bg-[#bfbfcd] pl-[6.500px] text-[8.400px] text-[#3e3c46]">
      <div className="mt-[4px] flex h-[19px] w-[188px] items-center border-b border-[#a5a5b5]">
        <Cell className="h-[19px] w-[44px] border-b-2 border-[#3a82dc] pl-px text-[#2f75d0]">文档结构图</Cell>
        <Sep className="ml-[8px] h-[11px] bg-[#9a99a8]" />
        <Cell className="ml-[7px] w-[123px]">书签</Cell>
        <Svg w={7} h={16}><path d="M.500 0l6 6M6.500 0l-6 6" stroke="#9290a0" /></Svg>
      </div>
      <div className="mt-[5px] h-[326px] w-[186px] bg-[#eeedf2] pt-px">
        {outline.map((o) => (
          <div key={o.t} className={`flex h-[15.400px] items-center whitespace-pre ${o.pad} ${o.sel ? "bg-[#c0d3f5]" : "border-b border-[#e6e1e9]"}`}>
            {o.arrow && (
              <Svg w={9} h={5}><path d="M4.500 0v4H.500z" fill="#55637a" /></Svg>
            )}
            {o.t}
          </div>
        ))}
      </div>
      <div className="mt-[10px] flex gap-[8px] pl-[35px] text-[#555]">
        <Cell className="h-[16px] w-[54px] justify-between border border-[#a7a6b5] bg-[#f7f6fa] px-[4px] pl-[5px]">显示级别<Caret /></Cell>
        <Cell className="h-[16px] w-[54px] justify-between border border-[#a7a6b5] bg-[#f7f6fa] pr-[3px] pl-[10px]">100%<Caret /></Cell>
      </div>
    </aside>
  );
}

const tableRows: [string, string][][] = [
  [["byte(字节)", "w-[72px]"], ["8", "w-[66px]"], ["-128 - 127", "w-[309px]"], ["0", ""]],
  [["shot(短整型)", "w-[86px]"], ["16", "w-[65px]"], ["-32768 - 32768", "w-[310px]"], ["0", ""]],
  [["int(整型)", "w-[86px]"], ["32", "w-[68px]"], ["-2147483648-2147483648", "w-[303px]"], ["0", ""]],
  [["long(长整型)", "w-[85px]"], ["64", "w-[66px]"], ["-9233372036854477808-9233372036854477808", "w-[289px]"], ["0", ""]],
  [["float(浮点型)", "w-[86px]"], ["32", "w-[66px]"], ["-3.40292347E+38-3.40292347E+38", "w-[299px]"], ["0.0f", ""]],
  [["double(双精度)", "w-[92px]"], ["64", "w-[59px]"], ["-1.79769313486231570E+308-1.79769313486231570E+308", "w-[289px]"], ["0.0d", ""]],
  [["char(字符型)", "w-[84px]"], ["16", "w-[62px]"], ["' \\u0000 - u\\ffff '", "w-[315px]"], ["'\\u0000 '", ""]],
];

function Page() {
  return (
    <div className="ml-[20px] flex h-[370px] w-[703px] flex-col bg-white">
      <div className="mt-[70px] flex h-[24px]">
        <span className="ml-[95px] block h-[24px] w-[23px] border-r border-b border-[#a9a8a8]" />
        <span className="ml-[541px] block h-[24px] w-[23px] border-b border-l border-[#b6b5b5]" />
      </div>
      <div className="mt-[3px] ml-[117px] flex h-[195px] w-[541px] border-l border-[#c9ccd8]">
        <div className="w-[535px] font-['Liberation_Sans','Noto_Sans_CJK_SC',sans-serif] text-[9.200px] text-[#525252]">
          <div className="flex h-[12px] items-center font-['Noto_Sans','Noto_Sans_CJK_SC',sans-serif] text-[9.300px] font-bold text-[#111]">
            <Svg w={13} h={9}><path d="M2.500.500h4l2 2.500v5.500h-6z" fill="#fff" stroke="#b8402c" strokeWidth="1.200" /><path d="M4 4h3.500v3H4z" fill="#d8553a" /></Svg>
            <span className="tracking-[0.3px]">Java 占用字节数</span>
          </div>
          <div className="mt-px flex h-[17px] items-center pl-[13px]">
            <Cell className="w-[92px] text-[9.400px] text-[#336fb5]">数据类型</Cell>
            <Cell className="w-[120px] tracking-[0.100px]">大小(二进制位数)</Cell>
            <Cell className="w-[253px]">范围</Cell>
            <Cell>默认值</Cell>
          </div>
          <div className="mt-[17px] flex flex-col pl-[13px]">
            {tableRows.map((r) => (
              <div key={r[0][0]} className="flex h-[17.300px] items-center">
                {r.map(([t, w], i) => (
                  <Cell key={i} className={w}>
                    {t.startsWith("float") ? <>float(<span className="text-[#336fb5]">浮点型</span>)</> : t.startsWith("-92") ? <span className="tracking-[-0.07px]">{t}</span> : t}
                  </Cell>
                ))}
              </div>
            ))}
          </div>
          <div className="mt-[10px] ml-[13px] flex h-[11px] items-center bg-[#eefbdc]">
            <Cell className="w-[84px] text-[#336f9a]">boolean(布尔型)</Cell>
            <Cell className="w-[59px]">1</Cell>
            <Cell className="w-[319px]">true/false</Cell>
            <Cell>false</Cell>
          </div>
        </div>
        <div className="flex w-[5px] flex-col items-start justify-center bg-[#bcc0ce]">
          <span className="block size-[4px] border border-[#666] bg-white" />
        </div>
      </div>
      <div className="mt-[25px] flex h-[21px] items-center pl-[117px] text-[12.700px] tracking-[0.220px] whitespace-pre text-[#111]">Int 占  4 个字节，32 位</div>
      <div className="flex h-[21px] items-center text-[12.200px] text-[#111]">
        <Cell className="w-[117px] gap-[4px] pl-[56px]">
          <Svg w={9} h={10} className="-mt-[3px]"><path d="M.500.500h5l3 3v6h-8zM2 4h5M2 6.500h5" stroke="#9db3dc" /></Svg>
          <Caret color="#a0a0aa" />
        </Cell>
        <Cell className="w-[102px]">Boolean 1 位</Cell>
        <Svg w={7} h={12} className="-mt-[8px]"><path d="M1 .500h2l.500 1 .500-1h2M1 11.500h2l.500-1 .500 1h2M3.500 1v10" stroke="#333" /></Svg>
      </div>
    </div>
  );
}

function StatusBar() {
  return (
    <div className="flex h-[15px] shrink-0 items-center bg-[#dfdde3] pl-[5px] text-[8.400px] text-[#4a4850]">
      <Cell className="w-[34px]">页码: 3</Cell>
      <Cell className="w-[42px]">页面: 3/3</Cell>
      <Cell className="w-[28px]">节: 1/1</Cell>
      <Sep className="mr-[3px] h-[9px] bg-[#bbb]" />
      <Cell className="w-[23px]">行: 4</Cell>
      <Cell className="w-[25px]">列: 11</Cell>
      <Sep className="mr-[4px] h-[9px] bg-[#bbb]" />
      <Cell className="w-[39px]">字数: 964</Cell>
      <Sep className="mr-[2px] h-[9px] bg-[#bbb]" />
      <span className="block size-[5px] bg-[#1fa12f]" />
      <Cell className="ml-[3px] w-[36px]">拼写检查</Cell>
      <Sep className="mr-[395px] h-[9px] bg-[#bbb]" />
      <Svg w={52} h={13}>
        <circle cx="7" cy="6.500" r="4" stroke="#5e5d66" /><path d="M7 4v3h2M2 6h2" stroke="#5e5d66" />
        <path d="M17.500 2v9" stroke="#bbb" />
        <path d="M22 4V2.500h2M30 4V2.500h-2M22 9v1.500h2M30 9v1.500h-2" stroke="#5e5d66" /><rect x="23.500" y="4" width="5" height="5" fill="#5e5d66" />
        <rect x="37" width="15" height="13" fill="#bcd0f3" /><rect x="40.500" y="2.500" width="8" height="8" fill="#4d5a70" /><path d="M42 5h5M42 7h3" stroke="#dce6f8" />
      </Svg>
      <Svg w={58} h={13}>
        <rect x="7" y="2.500" width="8" height="8" fill="#6a6972" /><path d="M8 5h6M8 8h6M10 3v7" stroke="#dfdde3" />
        <path d="M25 2.500h6v3l2 2-3 3h-5z" fill="#6a6972" /><path d="M26 5h4M26 7h3" stroke="#dfdde3" />
        <rect x="41.500" y="2.500" width="8" height="8" fill="#6a6972" /><path d="M45.500 4l1.500 2-1.500 2L44 6z" fill="#eee" />
        <path d="M53.500 5.500h4l-2 3z" fill="#5e5d66" />
      </Svg>
      <Cell className="ml-[11px] w-[29px] tracking-[0.200px]">140 %</Cell>
      <Svg w={138} h={13}>
        <path d="M0 6.500h7" stroke="#55545c" strokeWidth="1.300" />
        <path d="M12 6.500h50" stroke="#4c88dc" strokeWidth="1.500" />
        <path d="M68 6.500h38" stroke="#aaa9b2" strokeWidth="1.300" />
        <circle cx="64" cy="6.500" r="4" fill="#fff" stroke="#88878f" />
        <path d="M110 6.500h7M113.500 3v7" stroke="#88878f" />
        <path d="M123 4V2.500h2M131 4V2.500h-2M123 9v1.500h2M131 9v1.500h-2M126 6.500h2" stroke="#88878f" />
      </Svg>
    </div>
  );
}

function TaskButton({ icon, children, active }: { icon: React.ReactNode; children: React.ReactNode; active?: boolean }) {
  return (
    <Cell className={`mr-[2px] h-[26px] w-[101.300px] gap-[4px] border pl-[5px] ${active ? "border-[#cfe0ee] bg-gradient-to-br from-[#c5d9e6] to-[#4d7ea3]" : "border-[#77acd0] bg-gradient-to-br from-[#5b97c2] to-[#1d649c]"}`}>
      {icon}
      {children}
    </Cell>
  );
}

const Grip = () => (
  <Svg w={6} h={22}>
    <path d="M1 0v22M3 0v22M5 0v22" stroke="#0c3f66" strokeDasharray="1 2" />
  </Svg>
);

function Taskbar() {
  return (
    <div className="flex h-[27px] w-[952px] shrink-0 items-center border-t border-[#4a6d90] bg-[linear-gradient(to_right,#1c6ea4_0%,#1b72aa_50%,#0e5796_58%,#083f80_75%,#0b3f78_100%)] text-[8.800px] text-[#f1f6fa]">
      <Cell className="w-[41px] pl-[6px]">
        <Svg w={25} h={25} vb="0 0 26 26">
          <circle cx="13" cy="13" r="12.500" fill="#2a6a9c" stroke="#8fb9d4" />
          <path d="M13 1a12 12 0 0 1 11 9q-11-5-22 0a12 12 0 0 1 11-9z" fill="#b9d4e4" fillOpacity=".6" />
          <path d="M6 7.500q3.500-2 6.500 0l-.8 5.300q-3-1.500-6.200.2z" fill="#ed6b31" />
          <path d="M13.500 8q3.500 2 7 0l-1 5.500q-3 1.500-6.500 0z" fill="#9fcf3f" />
          <path d="M5 14q3-1.500 6.500 0l-1 5.500q-3-1.500-6.300 0z" fill="#4aa5e8" />
          <path d="M12.500 14.500q3 1.500 6.500 0l-1 5.500q-3 1.500-6.500 0z" fill="#fcc93a" />
        </Svg>
      </Cell>
      <Grip />
      <Cell className="ml-[14px] w-[44px]">
        <Svg w={23} h={22}>
          <path d="M1 5q3 1 5 3Q8 1 16 1q-4 4-1 7 3-4 7-5 1 6-4 10Q8 16 1 11q3 0 4-1Q2 8 1 5z" fill="#7fd83e" />
          <path d="M4 12q8 3 16-1 2 5-3 8-6 4-10 0-3-3-3-7z" fill="#e3f5d3" />
          <path d="M9 16q6 1 10-3 0 6-5 8-4 0-5-5z" fill="#4fb81f" />
        </Svg>
      </Cell>
      <Cell className="w-[33px]"><ChromeLogo s={20} /></Cell>
      <TaskButton icon={<Svg w={22} h={22} vb="0 0 22 23"><rect width="22" height="23" fill="#2d2850" /><circle cx="11" cy="11.500" r="8" fill="#1a1a1a" stroke="#d8cfc4" strokeWidth="3" strokeDasharray="2.500 1.500" /><path d="M1 6.500h20v4H1z" fill="#2a1d20" /><text x="11" y="10.500" fontSize="5.500" fontWeight="bold" fontFamily="Liberation Sans" textAnchor="middle" fill="#e07a25">Java EE</text><text x="11" y="17" fontSize="7" fontWeight="bold" fontFamily="Liberation Sans" textAnchor="middle" fill="#e07a25">IDE</text></Svg>}><span className="tracking-[0.050px]">Java - struts2...</span></TaskButton>
      <TaskButton icon={<Svg w={22} h={22}><path d="M2 14q0-9 9-10 9 0 8 6-2 3-5 2-2 2 0 5-3 4-8 2-4-2-4-5z" fill="#d8ecf7" /><circle cx="6" cy="12" r="1.800" fill="#47a447" /><circle cx="10" cy="8" r="1.800" fill="#d85050" /><circle cx="7" cy="16" r="1.500" fill="#e05a2c" /><path d="M20 1l2 2-8 17-3 1z" fill="#d58a45" /></Svg>}><span className="-ml-px text-[8.500px]">java所占字节...</span></TaskButton>
      <TaskButton icon={<Svg w={21} h={22} className="mr-px"><path d="M2 2l6-1 8 4v16l-8-1-6 1z" fill="#f7df8b" /><path d="M8 5l9-2v15l-9 3z" fill="#e8bd4e" /><path d="M2 2l6 3v16l-6-2z" fill="#fbeeb4" /></Svg>}><span className="text-[8.500px]">面试视频</span></TaskButton>
      <TaskButton active icon={<Svg w={22} h={22}><rect width="22" height="22" rx="4" fill="#1197f2" /><path d="M5 7v8l4-4 3 4h5V7" stroke="#fff" strokeWidth="2" /></Svg>}><span className="-ml-px">笔记.docx - W...</span></TaskButton>
      <Cell className="ml-[5px] w-[13px]"><Grip /></Cell>
      <Svg w={62} h={24}>
        <path d="M4 6h2v3" stroke="#aaa" /><rect y="8" width="11" height="7" fill="#c9c9c9" /><path d="M1 10h9M1 12.500h9" stroke="#555" strokeDasharray="1 1" />
        <circle cx="21" cy="11" r="5.500" fill="#2d2aa0" stroke="#d9d9ee" />
        <text x="21" y="14.500" fontSize="9" fontWeight="bold" fontFamily="Liberation Sans" textAnchor="middle" fill="#fff">?</text>
        <path d="M34 7h4v3h-4zM35.500 5h4v3" stroke="#fff" /><path d="M34 14h4l-2 3z" fill="#fff" />
        <path d="M52 17q-3-4 1-5 1-5 6-3 3-1 3 3 2 3-1 5z" fill="#fff" />
        <path d="M58 6q3 0 2.500 3" stroke="#e8eef4" />
      </Svg>
      <Cell className="ml-[7px] w-[30px] text-[8.600px]">27℃</Cell>
      <Svg w={180} h={20}>
        <path d="M0 7h3l4-4v14l-4-4H0z" fill="#cf8763" /><path d="M9 6q2 4 0 8" stroke="#d33" />
        <rect x="15" y="6" width="12" height="7" rx="2" fill="#2a89d8" /><path d="M17 8v4M19 8v4M17 10h2M21 8v4h3V8z" stroke="#fff" strokeWidth=".8" />
        <path d="M35 5v10" stroke="#555" strokeWidth="3" /><circle cx="34" cy="6" r="3" fill="#333" stroke="#aaa" /><rect x="38" y="6" width="6" height="6" rx="1" fill="#e02828" />
        <circle cx="53" cy="8" r="4" fill="#f2bd36" /><circle cx="57" cy="12" r="3.500" fill="#9fd1f0" />
        <path d="M67 4h6v4h-1v6h-4V8h-1z" fill="#d5e5f0" /><path d="M68 10h4" stroke="#3582c0" strokeWidth="2" />
        <rect x="83" y="5" width="10" height="8" fill="#8a8a8a" /><path d="M83 15h4M91 13v3" stroke="#ccc" strokeWidth="2" />
        <circle cx="104" cy="10" r="5.500" fill="#d02a2a" stroke="#e8b0b0" /><path d="M100.500 10h7" stroke="#fff" strokeWidth="2" />
        <rect x="116" y="5" width="10" height="10" fill="#a8cdf2" /><path d="M118.500 5v10M119 8h6M119 12h6" stroke="#2458a0" />
        <path d="M132 5h8v9h-8z" fill="#3a7ed0" /><path d="M133 12q2-8 6-2" stroke="#fff" /><rect x="137" y="10" width="7" height="5" fill="#f28b2b" />
        <path d="M150 6h8v6h-8z" stroke="#ddd" /><path d="M156 8l5 8h-9z" fill="#f7d23a" /><path d="M156 11v3" stroke="#222" />
        <path d="M167 5l4-2 2 5-3 4z" fill="#909090" /><circle cx="173" cy="13" r="4" fill="#28a745" /><path d="M171 13l1.500 1.500 2.500-3" stroke="#fff" />
      </Svg>
      <div className="ml-[8px] flex w-[50px] flex-col items-center text-[8.700px] leading-[11px] whitespace-nowrap">
        <span>14:07 星期三</span>
        <span>2016/5/4</span>
      </div>
      <div className="ml-[5px] flex h-[23px] w-[28px] flex-col items-center border border-[#17324f] bg-[#2b7db2] text-[8px] leading-[11px] text-[#9bc8e6]">
        <span>儿童节</span>
        <span className="w-full bg-[#aeb3b8] text-center text-[#8a8f94]">28</span>
      </div>
      <span className="ml-[3px] block h-[26px] w-[8px] border-l border-[#45627f] bg-[#12365c]" />
    </div>
  );
}

function VideoFrame() {
  return (
    <div className="relative flex h-[540px] w-[980px] shrink-0 flex-col bg-black pt-[2px] pl-[14px] font-['Noto_Sans','Noto_Sans_CJK_SC',sans-serif]">
      <div className="flex h-[509px] w-[952px] shrink-0 bg-gradient-to-b from-[#0837a0] to-[#0a5fc0]">
        <div className="ml-[6px] flex h-[509px] w-[942px] flex-col bg-[#e3e1e6]">
          <TitleRow />
          <MenuRow />
          <Ribbon />
          <DocTabs />
          <div className="flex h-[389px] shrink-0">
            <Sidebar />
            <div className="flex w-[723px] flex-col bg-[#b9b9c8] pt-[4px]">
              <Page />
              <div className="flex h-[15px] items-center bg-[#b4b3c1] pl-[5px]">
                <Svg w={5} h={7}><path d="M5 0v7L0 3.500z" fill="#fff" /></Svg>
                <div className="ml-[7px] flex h-[9px] w-[612px] items-center justify-center gap-[2px] bg-[#d2d1d9]">
                  <Sep className="h-[5px] bg-[#888]" />
                  <Sep className="h-[5px] bg-[#888]" />
                  <Sep className="h-[5px] bg-[#888]" />
                </div>
              </div>
            </div>
            <div className="flex w-[13px] flex-col items-center bg-[#a8a6b4]">
              <Svg w={9} h={20} className="mt-[4px]"><path d="M1 0h6v6H1z" fill="#e8e7ee" /><path d="M3 1v4M5 4h4v3H5" stroke="#8b8998" /><path d="M4.500 13.500l4 4h-8z" fill="#fff" /></Svg>
              <div className="mt-[202px] flex h-[28px] w-[10px] flex-col items-center justify-center gap-[2px] bg-[#dddce3]">
                <span className="block h-px w-[5px] bg-[#888]" />
                <span className="block h-px w-[5px] bg-[#888]" />
                <span className="block h-px w-[5px] bg-[#888]" />
              </div>
              <Svg w={9} h={48} className="mt-[72px]"><path d="M1 0h7L4.500 3.500zM4.500 11l3.500 3H1zM4.500 14.500l3.500 3H1zM1 37h7l-3.500 3zM1 40.500h7L4.500 44z" fill="#fff" /><circle cx="4.500" cy="27.500" r="2" stroke="#fff" /></Svg>
            </div>
            <div className="flex w-[5px] flex-col bg-[#e0dfe5] pt-[173px]">
              <div className="flex h-[70px] items-center justify-center bg-[#1f66c0]">
                <Svg w={4} h={6}><path d="M4 0v6L0 3z" fill="#fff" /></Svg>
              </div>
            </div>
          </div>
          <StatusBar />
        </div>
      </div>
      <Taskbar />
      <div className="absolute top-[459px] left-[886px]">
        <Svg w={70} h={62} className="overflow-visible drop-shadow-[0_0_3px_rgba(0,0,0,.55)]">
          <path d="M18 5l9 8M45 5l-9 8" stroke="#fff" strokeWidth="3" strokeLinecap="round" />
          <rect x="3" y="11.500" width="62" height="39" rx="6" fill="#f4f4f4" fillOpacity=".8" />
          <path d="M14 50.500q5 6 10 0zM45 50.500q5 6 10 0z" fill="#fff" fillOpacity=".85" />
          <path d="M26 22q0-2 2-1.200l15.500 8.500q1.500 1.500 0 3L28 41q-2 .5-2-1.200z" fill="#77787b" />
          <path d="M49 25l4 4-4 4z" fill="#fff" />
        </Svg>
      </div>
      <span className="absolute top-[515px] left-[933px] block h-[19px] w-[16px] rounded-[7px] bg-white/90" />
    </div>
  );
}

/* ---------- player controls and page ---------- */

function Controls() {
  return (
    <div className="flex h-[30px] w-[980px] shrink-0 items-center border-b border-[#e2e2e2] bg-white pl-[12px] text-[12px] text-[#99a2aa]">
      <Svg w={17} h={18} className="mr-[22px]">
        <path d="M.500 2Q.500 0 2.500.500L15 7.500q1.500 1.500 0 3L2.500 17.500q-2 .500-2-1.500z" fill="#99a2aa" />
      </Svg>
      <Svg w={18} h={17} className="mr-[14px]">
        <path d="M0 2Q0 0 2 1l10 6q1 1.500 0 3L2 16q-2 .500-2-1z" fill="#99a2aa" />
        <rect x="13" y=".500" width="5" height="16" rx="2" fill="#99a2aa" />
      </Svg>
      <div className="relative flex h-[6px] w-[605px] overflow-visible rounded-[3px] bg-[#6edbee]">
        <div className="h-full w-[578px] rounded-l-[3px] bg-[#00a1d6]" />
        <span className="absolute -top-[4px] left-[571px] block size-[14px] rounded-full border border-[#9fc6e4] bg-white shadow-[0_0_3px_#6fb4dc]" />
      </div>
      <Cell className="ml-[8px] w-[86px] tracking-[0.300px]">02:42 / 02:47</Cell>
      <Cell className="w-[37px]">
        <Svg w={15} h={13}>
          <path d="M0 4.500q0-1 1-1h1L6.500.500V12.500L2 9.500H1q-1 0-1-1z" fill="#99a2aa" />
          <path d="M8 0q7 1 7 6.500T8 13z" fill="#99a2aa" />
          <path d="M10 3.500q3 3 0 6" stroke="#fff" />
        </Svg>
      </Cell>
      <Cell className="w-[48px]">720P</Cell>
      <Svg w={106} h={16}>
        <path d="M2.500 1h12q1.500 0 1.500 1.500v8q0 1.500-1.500 1.500H7l-3 3v-3H2.500Q1 12 1 10.500v-8Q1 1 2.500 1z" fill="#99a2aa" />
        <path d="M32 7.500V6q0-3 3-3h6M39 .500l3 2.500-3 2.500M45 8.500V10q0 3-3 3h-6M38 10.500l-3 2.500 3 2.500" stroke="#99a2aa" strokeWidth="2" />
        <path d="M31 2l14 12" stroke="#fff" strokeWidth="3.500" />
        <path d="M31.500 2.500l13.500 11.500" stroke="#99a2aa" strokeWidth="1.600" />
        <path d="M63 1l2 2.500M71 1l-2 2.500" stroke="#99a2aa" strokeWidth="2" strokeLinecap="round" />
        <rect x="59.500" y="4.500" width="15" height="9.500" rx="3" stroke="#99a2aa" strokeWidth="2" />
        <circle cx="64" cy="9" r="1.200" fill="#99a2aa" /><circle cx="70" cy="9" r="1.200" fill="#99a2aa" />
        <path d="M90 7q0-4 3-6l3 5-1 1.500zM106 7q0-4-3-6l-3 5 1 1.500zM94 15l2.500-4.500h3.500l2.500 4.500z" fill="#99a2aa" />
        <circle cx="98" cy="8" r="1.300" fill="#99a2aa" />
      </Svg>
    </div>
  );
}

function DanmakuInput() {
  return (
    <div className="flex h-[38px] w-[980px] shrink-0 items-center bg-white text-[12px] shadow-[0_1px_3px_#e3e8ea]">
      <Cell className="h-full w-[81px] border-r border-[#dcdcdc] pl-[13px]">
        <Svg w={14} h={13} className="mr-[26px]">
          <path d="M1.500 0h11q1.500 0 1.500 1.500v7q0 1.500-1.500 1.500H6l-2 2.500L3.500 10h-2Q0 10 0 8.500v-7Q0 0 1.500 0z" fill="#999" />
          <path d="M3.500 3.500h7M3.500 6h4" stroke="#fff" />
        </Svg>
        <Svg w={14} h={13}>
          <rect x="1" y="1" width="12" height="11" rx="1" stroke="#999" strokeWidth="1.800" />
          <path d="M7 7.500h4.500L9.300 10.500z" fill="#999" />
        </Svg>
      </Cell>
      <Cell className="h-full w-[828px] justify-between bg-gradient-to-b from-[#f4f4f4] to-white pr-[9px] pl-[10px] text-[#757575]">
        <span>您可以在这里输入弹幕吐槽哦~</span>
        <span className="text-[#99a2aa]">弹幕礼仪 &gt;</span>
      </Cell>
      <Cell className="h-full w-[71px] bg-gradient-to-b from-[#f4f4f4] to-white">
        <button className="h-[30px] w-[66px] rounded-[4px] bg-[#00a1d6] pl-[4px] text-[12px] text-white">发送 &gt;</button>
      </Cell>
    </div>
  );
}

function ShareCard() {
  return (
    <div className="mt-[20px] h-[30px] w-[981px] shrink-0 rounded-t-[4px] border border-[#e5e9ef] bg-white pt-[18px] pl-[87px]">
      <Svg w={440} h={12}>
        {[10, 57, 105, 151, 199].map((x) => (
          <circle key={x} cx={x} cy="15.500" r="12" stroke="#444" strokeWidth="2" />
        ))}
        <path d="M290.500 2l-3 4h6z" fill="#f3a25b" />
        <circle cx="405.500" cy="15.500" r="13.500" stroke="#f57f20" strokeWidth="2" />
      </Svg>
    </div>
  );
}

export default function App() {
  return (
    <div className="flex h-[768px] w-[1366px] flex-col overflow-hidden bg-[#f4f8fa] font-['Noto_Sans','Noto_Sans_CJK_SC',sans-serif]">
      <TopBar />
      <div className="flex h-[744px]">
        <Launcher />
        <div className="flex w-[1301px] flex-col">
          <TabStrip />
          <UrlBar />
          <Bookmarks />
          <div className="flex h-[651px] shrink-0 font-['Liberation_Sans','Noto_Sans_CJK_SC',sans-serif]">
            <main className="ml-[153px] flex w-[981px] flex-col">
              <VideoFrame />
              <Controls />
              <DanmakuInput />
              <ShareCard />
            </main>
            <aside className="mt-[503px] ml-[9px] flex w-[143px] flex-col gap-[6px] text-[12px] leading-[20px] text-[#6d757a]">
              <div className="flex h-[50px] w-[48px] items-center justify-center rounded-[4px] border border-[#e0e6ed] bg-[#f6f9fa]">
                <Svg w={18} h={10}>
                  <path d="M1.500 8.500L9 2l7.500 6.500" stroke="#99a2aa" strokeWidth="3" strokeLinecap="round" />
                </Svg>
              </div>
              <div className="flex h-[42px] w-[48px] flex-col items-center justify-center rounded-[4px] border border-[#e0e6ed] bg-[#f6f9fa]">
                <span>mini</span>
                <span>OFF</span>
              </div>
            </aside>
            <div className="flex h-[651px] w-[15px] flex-col items-center justify-between bg-[#f1f1f1] py-[6px]">
              <Svg w={7} h={4}><path d="M3.500 0L7 4H0z" fill="#505050" /></Svg>
              <div className="mb-[136px] h-[56px] w-[11px] bg-[#c1c1c1]" />
              <Svg w={7} h={4}><path d="M0 0h7L3.500 4z" fill="#505050" /></Svg>
            </div>
          </div>
        </div>
      </div>
    </div>
  );
}
